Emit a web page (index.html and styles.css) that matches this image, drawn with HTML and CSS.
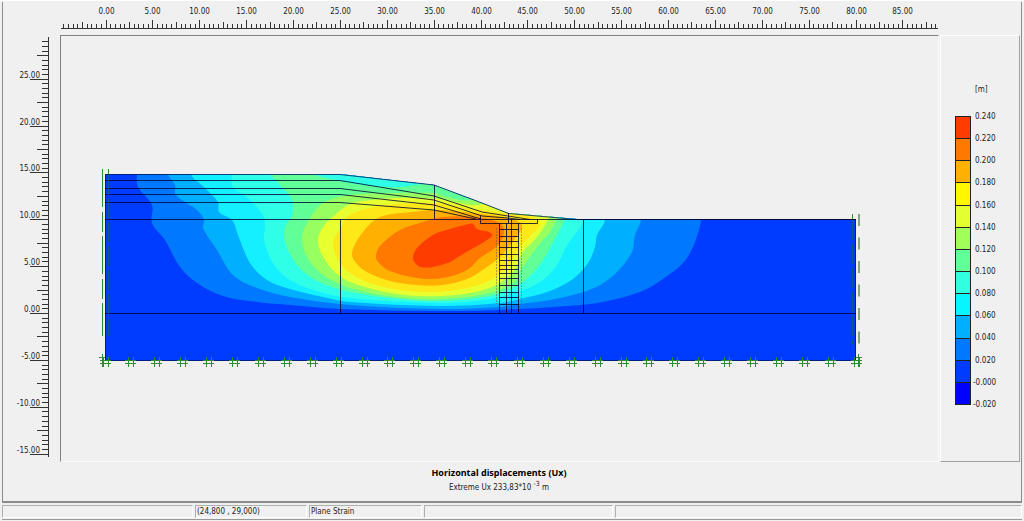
FILE: index.html
```html
<!DOCTYPE html>
<html lang="en">
<head>
<meta charset="utf-8">
<title>Horizontal displacements (Ux)</title>
<link rel="stylesheet" href="styles.css">
</head>
<body>
<div class="window">
  <main class="workspace">
    <svg class="ruler ruler-x" id="ruler-x" role="img" aria-label="Horizontal ruler"></svg>
    <svg class="ruler ruler-y" id="ruler-y" role="img" aria-label="Vertical ruler"></svg>
    <section class="view">
      <svg class="plot" role="img" aria-label="Contour plot of horizontal displacements">
        <defs>
          <clipPath id="soil"><path d="M105 174H340L434 185L482 203L508 213L577 219H856V361H105Z"/></clipPath>
        </defs>
        <g transform="translate(-61 -36)">
          <g clip-path="url(#soil)">
            <rect x="105" y="170" width="751" height="191" fill="#003cff"/>
            <g id="contours"></g>
          </g>
          <g class="mesh">
            <path class="outline" d="M105.500 174.500H340L434 185L482 203L508.500 213.500L577 219.500H855.500V360.500H105.500Z"/>
            <path d="M105 180.500H340L434 196L482 212L508 216L530 219.500"/>
            <path d="M105 188.500H340L434 200L482 216L508 218L520 219.500"/>
            <path d="M105 194.500H340L434 205L481 219"/>
            <path d="M105 202.500H340L434 210L476 219"/>
            <path d="M105 219.500H856M105 313.500H856"/>
            <path d="M340.500 219V313M434.500 185V219M583.500 219V313M508.500 213V223"/>
            <path d="M480.500 216V223.500H537.500V219"/>
            <path d="M499.500 223V313M506.500 223V313M511.500 219V313M518.500 223V313"/>
            <path id="pile-rows"/>
            <path class="interface" d="M496.500 228V304M521.500 228V304"/>
          </g>
          <g class="fixity">
            <path stroke-dasharray="38 5 20 4" d="M102.500 169V336"/>
            <path d="M108.500 169V174M852.500 214V219"/>
            <path class="inside" stroke-dasharray="20 4" d="M108.500 175V336M852.500 220V345"/>
            <path class="right" stroke-dasharray="12 11.500" d="M859 214V345"/>
            <path id="supports"/>
            <path d="M99 357.500H105M102.500 354V367M856 357.500H862M858.500 354V367"/>
          </g>
        </g>
      </svg>
    </section>
    <aside class="legend">
      <div class="unit">[m]</div>
      <div class="scale">
        <div class="swatches" id="swatches"></div>
        <ol class="values" id="values"></ol>
      </div>
    </aside>
    <footer class="caption">
      <h1>Horizontal displacements (Ux)</h1>
      <p>Extreme Ux 233,83*10 <sup>-3</sup> m</p>
    </footer>
  </main>
  <div class="status">
    <span></span><span>(24,800 , 29,000)</span><span>Plane Strain</span><span></span><span></span>
  </div>
</div>
<script src="script.js"></script>
</body>
</html>
```
FILE: styles.css
```css
* { box-sizing: border-box; }
body {
  margin: 0;
  background: #f0f0f0;
  color: #222;
  font: 8px/12px "DejaVu Sans Condensed", "DejaVu Sans", sans-serif;
}
.window {
  display: flex;
  flex-direction: column;
  min-height: 100vh;
  padding: 1px 2px 1px;
  border-top: 1px solid #fff;
}
.workspace {
  flex: 1;
  display: grid;
  grid-template-columns: 57px minmax(0, 1fr) 82px;
  grid-template-rows: 33px minmax(0, 1fr) 39px;
  border: 1px solid #8c8c8c;
  border-top: 0;
  border-bottom-width: 2px;
}
.ruler { display: block; width: 100%; height: 100%; overflow: hidden; }
.ruler-x { grid-column: 1 / 3; grid-row: 1; }
.ruler-y { grid-column: 1; grid-row: 2; }
.ruler path { stroke: #333; fill: none; }
.ruler text { fill: #222; }
.view {
  grid-column: 2;
  grid-row: 2;
  border: 1px solid #fafafa;
  border-top-color: #808080;
  border-left-color: #808080;
}
.plot { display: block; width: 100%; height: 100%; }
.mesh path { fill: none; stroke: #000030; stroke-opacity: .8; }
.mesh .outline { stroke: #001860; }
.mesh .interface { stroke: #665544; stroke-opacity: .5; stroke-dasharray: 2 1; }
.fixity path { fill: none; stroke: #2f8a35; }
.fixity .inside { stroke: #0c5a90; }
.fixity .right { stroke: #83a67c; stroke-width: 2; }
.legend {
  grid-column: 3;
  grid-row: 2;
  margin: 0 1px 0 1px;
  padding: 48px 0 0 14px;
  border: 1px solid #fff;
  border-right-color: #a0a0a0;
  border-bottom-color: #a0a0a0;
}
.unit { padding-left: 20px; }
.scale { display: flex; align-items: flex-start; margin-top: 20px; }
.swatches {
  display: flex;
  flex-direction: column;
  width: 16px;
  height: 289px;
  border: 1px solid #222;
  border-top: 0;
}
.swatches div { flex: 1; border-top: 1px solid #222; }
.values {
  display: flex;
  flex-direction: column;
  width: 28px;
  height: 310px;
  margin: -5px 0 0;
  padding: 0;
  list-style: none;
}
.values li { flex: 1; padding-left: 4px; white-space: nowrap; }
.values .negative { padding-left: 2px; }
.caption {
  grid-column: 1 / 4;
  grid-row: 3;
  padding: 4px 26px 0 0;
  text-align: center;
}
.caption h1 { margin: 0; font: bold 9px/14px "Noto Sans", sans-serif; color: #000; }
.caption p { margin: 0; line-height: 16px; }
.caption sup { font-size: 7px; line-height: 0; }
.status {
  display: grid;
  grid-template-columns: 191px 112px 113px 189px 1fr;
  gap: 2px;
  padding: 2px 0 1px;
  border-bottom: 1px solid #999;
}
.status span {
  height: 13px;
  padding-left: 1px;
  border: 1px solid #fff;
  border-top-color: #b0b0b0;
  border-left-color: #b0b0b0;
}
```
FILE: script.js
```js
const NS = "http://www.w3.org/2000/svg";
const UNIT = 9.375;

function add(parent, name, attrs, text) {
  const el = document.createElementNS(NS, name);
  for (const key in attrs) el.setAttribute(key, attrs[key]);
  if (text) el.textContent = text;
  parent.appendChild(el);
}

// Rulers: one tick per half metre, longer ones at 2.5 m and 5 m.
const rx = document.getElementById("ruler-x");
let d = "M58 26.5H935";
for (let i = -9; i <= 177; i++) {
  const x = Math.round(102.5 + i * UNIT / 2) + 0.5;
  const len = i % 10 === 0 ? 8 : i % 5 === 0 ? 6 : 4;
  d += `M${x} 26V${26 - len}`;
  if (i % 10 === 0) add(rx, "text", { x: x, y: 12, "text-anchor": "middle" }, (i / 2).toFixed(2));
}
add(rx, "path", { d });

const ry = document.getElementById("ruler-y");
d = "M45.5 2V422";
for (let i = -30; i <= 58; i++) {
  const y = Math.round(278 - i * UNIT / 2) + 0.5;
  const len = i % 10 === 0 ? 18 : i % 5 === 0 ? 11 : 6;
  d += `M45 ${y}H${45 - len}`;
  if (i % 10 === 0) add(ry, "text", { x: 37, y: y - 2, "text-anchor": "end" }, (i / 2).toFixed(2));
}
add(ry, "path", { d });

// Contour bands, from the outermost inwards.
const bands = [
  ["#0078ff", "137,150 137,174 138,187 152,205 152,223 165,240 180,267 197,283 223,296 257,302 290,305 340,309 440,311 520,309 580,305 603,302 640,292 663,279 683,263 693,247 698,233 701,219 701,150"],
  ["#00b0ff", "168,150 168,174 175,185 176,195 197,210 204,220 203,228 217,250 233,275 257,288 290,297 350,305 440,309 500,307 520,304 550,300 580,293 600,285 617,272 632,252 635,235 641,220 643,150"],
  ["#14f0ff", "191,150 191,174 205,188 218,202 219,212 232,220 238,235 250,263 267,280 290,289 323,297 350,302 440,306 500,303 520,299 550,291 573,279 588,263 595,247 597,235 605,220 608,150"],
  ["#30ffe8", "232,150 232,174 233,187 247,197 263,215 265,227 264,240 273,263 290,280 320,292 350,298 440,303 490,299 520,291 540,282 557,265 567,245 577,232 583,220 586,150"],
  ["#60ff98", "268,170 270,174 280,185 292,200 292,215 285,227 285,242 297,265 317,281 350,292 400,299 440,301 490,296 520,284 533,273 545,257 556,237 565,220 570,205 520,190 434,183 400,187 370,186 340,181 312,174 308,170"],
  ["#98ff60", "350,195 323,203 310,218 302,237 307,257 323,275 350,288 395,297 440,299 490,293 515,281 522,268 537,247 550,232 556,220 560,205 510,200 480,200 460,200 440,195 434,193 397,193"],
  ["#e8ff30", "363,201 350,204 337,213 323,227 318,243 330,267 350,282 397,294 440,296 480,291 503,281 516,268 522,253 537,237 548,220 552,205 510,200 485,204 470,205 440,199 397,198"],
  ["#ffe818", "380,206 350,215 340,228 333,245 343,267 367,282 400,290 435,292 467,288 487,282 503,271 512,260 520,247 533,233 540,224 533,217 507,214 473,209 434,203"],
  ["#ffb000", "413,212 380,217 363,232 352,253 357,264 367,272 390,281 417,285 443,285 467,279 487,267 502,255 516,237 522,225 507,218 473,213 434,210"],
  ["#ff7800", "423,222 400,230 380,246 376,257 380,264 390,271 417,278 443,278 467,270 480,258 498,245 504,232 500,223 473,217 443,217"],
  ["#ff3c00", "450,229 433,235 417,248 413,257 415,263 421,267 433,267 450,262 458,257 470,250 487,240 492,234 477,229 473,224 469,224"]
];

// Closed Catmull-Rom curve through the points, written as cubic segments.
function smooth(list) {
  const p = list.split(" ").map(s => s.split(",").map(Number));
  const n = p.length;
  let path = `M${p[0]}`;
  for (let i = 0; i < n; i++) {
    const [a, b, c, e] = [p[(i + n - 1) % n], p[i], p[(i + 1) % n], p[(i + 2) % n]];
    const k = Math.hypot(c[0] - b[0], c[1] - b[1]);
    const t1 = k / (Math.hypot(c[0] - a[0], c[1] - a[1]) || 1) / 3;
    const t2 = k / (Math.hypot(e[0] - b[0], e[1] - b[1]) || 1) / 3;
    // Edges above the ground surface stay straight.
    if (b[1] === 150 || c[1] === 150) path += `L${c}`;
    else path += `C${b[0] + (c[0] - a[0]) * t1},${b[1] + (c[1] - a[1]) * t1} ${c[0] - (e[0] - b[0]) * t2},${c[1] - (e[1] - b[1]) * t2} ${c}`;
  }
  return path + "Z";
}
const contours = document.getElementById("contours");
for (const [fill, points] of bands) add(contours, "path", { fill, d: smooth(points) });

const rows = [229, 236, 241, 247, 254, 260, 265, 269, 273, 278, 285, 292, 297, 304];
document.getElementById("pile-rows").setAttribute("d", rows.map(y => `M499 ${y + 0.5}H519`).join(""));

let marks = "";
for (let i = 0; i < 30; i++) {
  const x = Math.round(104.5 + i * 25.9);
  marks += `M${x - 5} 360.5H${x + 6}M${x - 5} 363.5H${x + 6}M${x - 1.5} 357V367M${x + 3.5} 357V367`;
}
document.getElementById("supports").setAttribute("d", marks);

// Legend
const colors = ["#ff3c00", "#ff7800", "#ffb000", "#fff600", "#e4ff30", "#a0ff58", "#60ff98", "#30ffe0", "#08f4ff", "#00b0ff", "#0078ff", "#003cff", "#0000ff"];
for (const color of colors) {
  const cell = document.createElement("div");
  cell.style.background = color;
  document.getElementById("swatches").appendChild(cell);
}
const values = ["0.240", "0.220", "0.200", "0.180", "0.160", "0.140", "0.120", "0.100", "0.080", "0.060", "0.040", "0.020", "-0.000", "-0.020"];
for (const value of values) {
  const item = document.createElement("li");
  item.textContent = value;
  if (value[0] === "-") item.className = "negative";
  document.getElementById("values").appendChild(item);
}
```
